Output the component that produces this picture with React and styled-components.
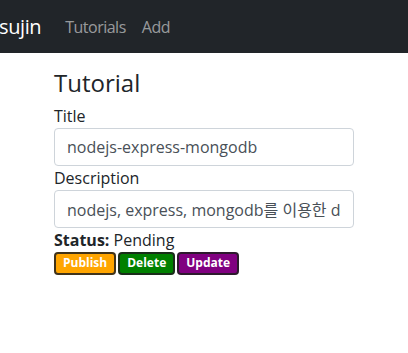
import React, { useState } from "react";
import styled, { createGlobalStyle } from "styled-components";

const GlobalStyle = createGlobalStyle`
  * {
    box-sizing: border-box;
  }
  body {
    margin: 0;
    font-family: "Open Sans", "Noto Sans CJK KR", sans-serif;
    font-size: 16px;
    line-height: 1.5;
    color: #212529;
    background-color: #ffffff;
  }
`;

export default function App() {
  const [title, setTitle] = useState("nodejs-express-mongodb");
  const [description, setDescription] = useState(
    "nodejs, express, mongodb를 이용한 demo"
  );

  return (
    <>
      <GlobalStyle />
      <Navbar>
        <Brand href="#">sujin</Brand>
        <NavList>
          <NavLink href="#">Tutorials</NavLink>
          <NavLink href="#">Add</NavLink>
        </NavList>
      </Navbar>

      <EditForm>
        <Heading>Tutorial</Heading>
        <form>
          <FormGroup>
            <Label htmlFor="title">Title</Label>
            <Input
              id="title"
              type="text"
              value={title}
              onChange={(e) => setTitle(e.target.value)}
            />
          </FormGroup>
          <FormGroup>
            <Label htmlFor="description">Description</Label>
            <Input
              id="description"
              type="text"
              value={description}
              onChange={(e) => setDescription(e.target.value)}
            />
          </FormGroup>
          <Status>
            <strong>Status:</strong> Pending
          </Status>
        </form>

        <ButtonRow>
          <Badge type="button" $bg="orange">
            Publish
          </Badge>
          <Badge type="button" $bg="green">
            Delete
          </Badge>
          <Badge type="button" $bg="purple">
            Update
          </Badge>
        </ButtonRow>
      </EditForm>
    </>
  );
}

const Navbar = styled.nav`
  height: 53px;
  display: flex;
  align-items: center;
  background-color: #212529;
`;

const Brand = styled.a`
  font-size: 20px;
  line-height: 30px;
  letter-spacing: -0.4px;
  color: #ffffff;
  text-decoration: none;
  margin-right: 16px;
  margin-left: -1px;
`;

const NavList = styled.div`
  display: flex;
`;

const NavLink = styled.a`
  padding: 0 8px;
  font-size: 16px;
  line-height: 24px;
  letter-spacing: -0.5px;
  color: rgba(255, 255, 255, 0.55);
  text-decoration: none;
`;

const EditForm = styled.div`
  max-width: 300px;
  margin: 0 auto;
  padding-top: 16px;
`;

const Heading = styled.h4`
  margin: 0 0 6px;
  font-size: 24px;
  font-weight: 400;
  line-height: 1.2;
`;

const FormGroup = styled.div`
  display: flex;
  flex-direction: column;
`;

const Label = styled.label`
  display: block;
  line-height: 24px;
`;

const Input = styled.input`
  display: block;
  width: 100%;
  height: 38px;
  padding: 6px 12px;
  font-family: inherit;
  font-size: 16px;
  line-height: 1.5;
  color: #495057;
  background-color: #ffffff;
  border: 1px solid #ced4da;
  border-radius: 4px;
  outline: none;
`;

const Status = styled.div`
  line-height: 24px;

  strong {
    font-weight: 700;
  }
`;

const ButtonRow = styled.div`
  display: flex;
  gap: 2px;
`;

const Badge = styled.button`
  height: 23px;
  padding: 0 7px;
  font-family: inherit;
  font-size: 12px;
  font-weight: 700;
  line-height: 1;
  color: #ffffff;
  background-color: ${(p) => p.$bg};
  border: 2px solid rgba(30, 30, 30, 0.85);
  border-radius: 4px;
  cursor: pointer;
`;
